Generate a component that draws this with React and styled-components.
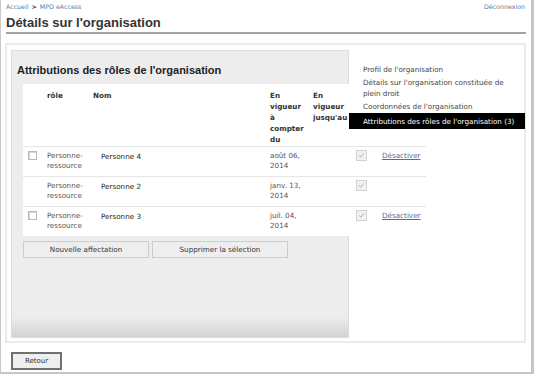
import React from 'react';
import styled, { createGlobalStyle } from 'styled-components';

const GlobalStyle = createGlobalStyle`
  html, body { margin: 0; padding: 0; background: #fff; }
  body { font-family: "DejaVu Sans", Verdana, sans-serif; }
`;

const Frame = styled.div`
  width: 534px;
  height: 374px;
  box-sizing: border-box;
  border-left: 1px solid #c9c9c9;
  border-right: 3px solid #c6c6c6;
  border-bottom: 2px solid #c6c6c6;
  display: flex;
  flex-direction: column;
`;

const TopBar = styled.div`
  display: flex;
  justify-content: space-between;
  padding: 3px 6px 0 5px;
  font-size: 6.3px;
  line-height: 8px;
`;

const Crumb = styled.a`
  color: #5b7aa0;
  text-decoration: none;
`;

const CrumbSep = styled.span`
  color: #333;
  font-weight: bold;
  margin: 0 3px;
`;

const Title = styled.h1`
  margin: 4px 0 0 5px;
  font-family: "Liberation Sans", Arial, sans-serif;
  font-size: 13px;
  line-height: 15px;
  font-weight: bold;
  color: #333;
`;

const Rule = styled.div`
  height: 2px;
  background: #a3a3a3;
  margin: 2px 5px 0 5px;
`;

const Panel = styled.div`
  display: flex;
  height: 300px;
  box-sizing: border-box;
  margin: 9px 5px 0 4px;
  border: 2px solid #ebebeb;
  padding: 5px 0 3px 4px;
`;

const RoleArea = styled.section`
  width: 338px;
  flex: none;
  box-sizing: border-box;
  border: 1px solid #dcdcdc;
  background: linear-gradient(to bottom, #ededed calc(100% - 20px), #d3d3d3 100%);
  padding: 13px 0 0 5px;
`;

const Heading = styled.h2`
  margin: 0;
  font-family: "Liberation Sans", Arial, sans-serif;
  font-size: 11px;
  line-height: 13px;
  font-weight: bold;
  color: #222;
`;

const Table = styled.table`
  width: 403px;
  margin: 7px 0 0 6px;
  table-layout: fixed;
  border-collapse: collapse;
  background: #fff;
  font-size: 7.2px;
`;

const Th = styled.th`
  height: 62px;
  box-sizing: border-box;
  padding: 6px 3px 0 3px;
  text-align: left;
  vertical-align: top;
  font-weight: bold;
  line-height: 11px;
  color: #333;
`;

const Tr = styled.tr`
  border-top: 1px solid #e6e6e6;
`;

const Td = styled.td`
  height: 30px;
  box-sizing: border-box;
  padding: ${({ $top = 4 }) => $top}px 3px 0 ${({ $left = 3 }) => $left}px;
  vertical-align: top;
  line-height: 10.5px;
  color: ${({ $dark }) => ($dark ? '#222' : '#555')};
`;

const Box = styled.span`
  display: block;
  width: 9px;
  height: 9px;
  box-sizing: border-box;
  border: 1px solid #b9b9b9;
  background: #fff;
  box-shadow: inset 1px 1px 0 #d6d6d6;
`;

const LockedBox = styled.span`
  display: flex;
  align-items: center;
  justify-content: center;
  width: 11px;
  height: 11px;
  box-sizing: border-box;
  border: 1px solid #d2d2d2;
  background: #f1f1f1;
`;

const Link = styled.a`
  color: #4d6f9c;
  text-decoration: underline;
  cursor: pointer;
`;

const Actions = styled.div`
  display: flex;
  gap: 3px;
  margin: 5px 0 0 6px;
`;

const Button = styled.button`
  width: ${({ $w }) => $w}px;
  height: 17px;
  box-sizing: border-box;
  padding: 0;
  border: 1px solid #cdcdcd;
  background: #eeeeee;
  font-family: "DejaVu Sans", Verdana, sans-serif;
  font-size: 7.2px;
  color: #333;
`;

const Nav = styled.nav`
  flex: 1;
  position: relative;
  z-index: 1;
  padding-top: 13px;
  font-size: 7.2px;
  line-height: 11px;
`;

const NavItem = styled.div`
  padding: ${({ $active }) => ($active ? '2.5px' : '1px')} 4px ${({ $active }) => ($active ? '2.5px' : '1px')} 14px;
  background: ${({ $active }) => ($active ? '#000' : 'transparent')};
  color: ${({ $active }) => ($active ? '#fff' : '#444')};
  margin-right: -1px;
`;

const Footer = styled.div`
  padding: 5px 0 0 10px;
`;

const BackButton = styled.button`
  width: 51px;
  height: 18px;
  box-sizing: border-box;
  padding: 0;
  border: 2px solid #707070;
  background: #efefef;
  font-family: "DejaVu Sans", Verdana, sans-serif;
  font-size: 7px;
  color: #333;
`;

const Check = () => (
  <svg width="7" height="7" viewBox="0 0 7 7">
    <path d="M1.2 3.4 L2.8 5.2 L5.8 1.4" fill="none" stroke="#a9a9a9" strokeWidth="0.9" />
  </svg>
);

const rows = [
  { id: 4, date: ['août 06,', '2014'], selectable: true, active: true },
  { id: 2, date: ['janv. 13,', '2014'], selectable: false, active: false },
  { id: 3, date: ['juil. 04,', '2014'], selectable: true, active: true },
];

const navItems = [
  "Profil de l'organisation",
  "Détails sur l'organisation constituée de plein droit",
  "Coordonnées de l'organisation",
];

export default function App() {
  return (
    <Frame>
      <GlobalStyle />
      <TopBar>
        <span>
          <Crumb>Accueil</Crumb>
          <CrumbSep>&gt;</CrumbSep>
          <Crumb>MPO eAccess</Crumb>
        </span>
        <Crumb>Déconnexion</Crumb>
      </TopBar>
      <Title>Détails sur l'organisation</Title>
      <Rule />
      <Panel>
        <RoleArea>
          <Heading>Attributions des rôles de l'organisation</Heading>
          <Table>
            <colgroup>
              <col style={{ width: 21 }} />
              <col style={{ width: 46 }} />
              <col style={{ width: 177 }} />
              <col style={{ width: 43 }} />
              <col style={{ width: 42 }} />
              <col style={{ width: 26 }} />
              <col style={{ width: 48 }} />
            </colgroup>
            <thead>
              <tr>
                <Th />
                <Th>rôle</Th>
                <Th>Nom</Th>
                <Th>En vigueur à compter du</Th>
                <Th>En vigueur jusqu'au</Th>
                <Th />
                <Th />
              </tr>
            </thead>
            <tbody>
              {rows.map((r) => (
                <Tr key={r.id}>
                  <Td $left={5}>{r.selectable && <Box />}</Td>
                  <Td>Personne-ressource</Td>
                  <Td $left={11} $top={5} $dark>Personne {r.id}</Td>
                  <Td>
                    {r.date[0]}
                    <br />
                    {r.date[1]}
                  </Td>
                  <Td />
                  <Td $left={4} $top={3}>
                    <LockedBox>
                      <Check />
                    </LockedBox>
                  </Td>
                  <Td $left={4}>{r.active && <Link>Désactiver</Link>}</Td>
                </Tr>
              ))}
            </tbody>
          </Table>
          <Actions>
            <Button $w={126}>Nouvelle affectation</Button>
            <Button $w={136}>Supprimer la sélection</Button>
          </Actions>
        </RoleArea>
        <Nav>
          {navItems.map((label) => (
            <NavItem key={label}>{label}</NavItem>
          ))}
          <NavItem $active>Attributions des rôles de l'organisation (3)</NavItem>
        </Nav>
      </Panel>
      <Footer>
        <BackButton>Retour</BackButton>
      </Footer>
    </Frame>
  );
}
